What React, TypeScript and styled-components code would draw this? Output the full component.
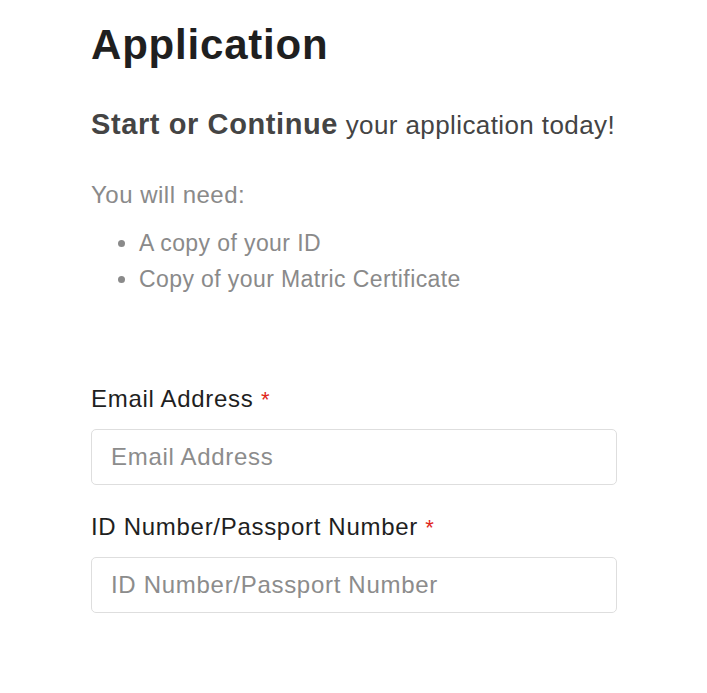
import React from "react";
import styled, { createGlobalStyle } from "styled-components";

const Global = createGlobalStyle`
  html, body { margin: 0; padding: 0; background: #fff; }
  body { font-family: "Liberation Sans", Arial, sans-serif; }
  * { box-sizing: border-box; }
`;

const Page = styled.main`
  width: 526px;
  margin-left: 91px;
  padding-top: 20px;
  display: flex;
  flex-direction: column;
`;

const Title = styled.h1`
  margin: 0;
  font-size: 42px;
  line-height: 50px;
  font-weight: 700;
  color: #1f1f1f;
  letter-spacing: 0.8px;
`;

const Lead = styled.p`
  margin: 37px 0 0;
  font-size: 26px;
  line-height: 34px;
  color: #444;
  letter-spacing: 0.4px;
  strong {
    font-size: 29px;
    font-weight: 700;
    letter-spacing: 0.6px;
  }
`;

const Need = styled.p`
  margin: 35px 0 0;
  font-size: 24px;
  line-height: 36px;
  color: #8a8a8a;
  letter-spacing: 0.5px;
`;

const List = styled.ul`
  margin: 12px 0 0;
  padding-left: 48px;
  font-size: 23px;
  line-height: 36px;
  color: #8a8a8a;
  letter-spacing: 0.4px;
`;

const Form = styled.form`
  margin-top: 84px;
  display: flex;
  flex-direction: column;
`;

const Field = styled.div<{ $first?: boolean }>`
  margin-top: ${(p) => (p.$first ? "0" : "24px")};
  display: flex;
  flex-direction: column;
  gap: 11px;
`;

const Label = styled.label`
  font-size: 24px;
  line-height: 36px;
  color: #1f1f1f;
  letter-spacing: 0.7px;
`;

const Req = styled.span`
  color: #e0261b;
  font-size: 22px;
`;

const Input = styled.input`
  width: 100%;
  height: 56px;
  border: 1px solid #dedede;
  border-radius: 5px;
  padding: 0 19px;
  font-family: "Liberation Sans", Arial, sans-serif;
  font-size: 24px;
  letter-spacing: 0.7px;
  color: #333;
  outline: none;
  &::placeholder {
    color: #8c8c8c;
  }
`;

export default function App() {
  return (
    <>
      <Global />
      <Page>
        <Title>Application</Title>
        <Lead>
          <strong>Start or Continue</strong> your application today!
        </Lead>
        <Need>You will need:</Need>
        <List>
          <li>A copy of your ID</li>
          <li>Copy of your Matric Certificate</li>
        </List>
        <Form>
          <Field $first>
            <Label htmlFor="email">
              Email Address <Req>*</Req>
            </Label>
            <Input id="email" type="email" placeholder="Email Address" />
          </Field>
          <Field>
            <Label htmlFor="idnum">
              ID Number/Passport Number <Req>*</Req>
            </Label>
            <Input id="idnum" type="text" placeholder="ID Number/Passport Number" />
          </Field>
        </Form>
      </Page>
    </>
  );
}
